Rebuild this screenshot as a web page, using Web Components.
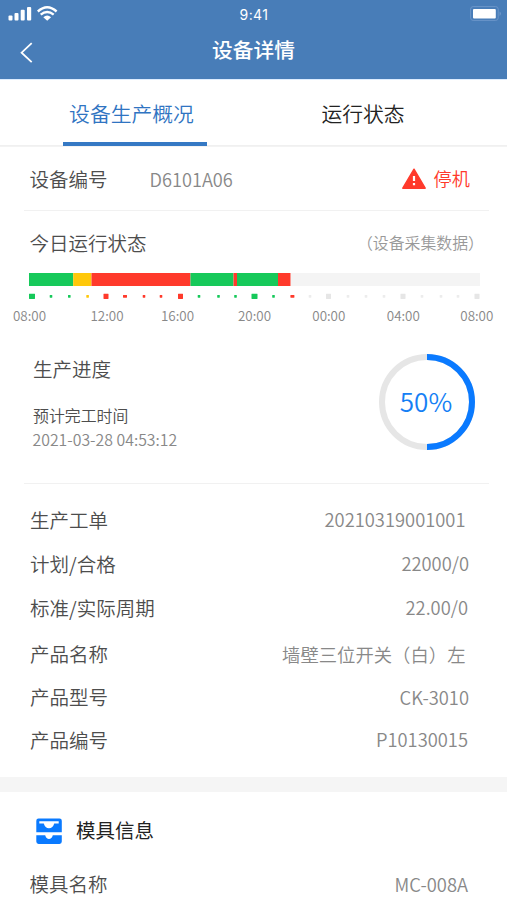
<!DOCTYPE html>
<html lang="zh-CN"><head><meta charset="utf-8"><title>设备详情</title>
<style>
body{margin:0;background:#fff;font-family:"Noto Sans CJK SC","Noto Sans",sans-serif;font-weight:350;color:#555;width:507px;height:900px;overflow:hidden}
</style></head><body>
<device-page></device-page>
<script>
const define=(name,html,setup)=>customElements.define(name,class extends HTMLElement{
  connectedCallback(){
    if(this.shadowRoot)return;
    const t=document.createElement('template');
    t.innerHTML=html;
    this.attachShadow({mode:'open'}).append(t.content.cloneNode(true));
    if(setup)setup.call(this,this.shadowRoot);
  }
});

define('status-bar',`<style>
:host{display:grid;grid-template-columns:1fr auto 1fr;height:29px;color:#fff;align-items:center}
svg{display:block}.r{justify-self:end}
time{font:400 14px/29px Inter,"Liberation Sans",sans-serif;letter-spacing:.4px;padding-left:1px}
</style>
<svg width="60" height="29" fill="#fff"><rect x="8.5" y="15.5" width="4" height="5" rx="1"/><rect x="14.5" y="13" width="4" height="7.5" rx="1"/><rect x="20.7" y="9.8" width="4" height="10.7" rx="1"/><rect x="27" y="7" width="4.2" height="13.5" rx="1"/>
<path d="M43.3 17.2Q47.2 14 51.1 17.2L47.2 20.8Z"/><g fill="none" stroke="#fff" stroke-width="2.4"><path d="M40.7 14.6Q47.2 9.2 53.7 14.6"/><path d="M37.8 11.5Q47.2 3.1 56.6 11.5"/></g></svg>
<time>9:41</time>
<svg class="r" width="40" height="29"><rect x="3.6" y="6.6" width="27.6" height="13.8" rx="2.5" fill="none" stroke="#6b95c9" stroke-width="1"/><rect x="6" y="9" width="22.8" height="9.5" rx="1" fill="#fff"/><path d="M32.7 11.5q2 2.2 0 4.5z" fill="#7ea3d1"/></svg>`);

define('nav-bar',`<style>
:host{display:grid;grid-template-columns:60px 1fr 60px;height:50px;color:#fff}
h1{margin:0;font-size:20.7px;font-weight:500;line-height:41px;text-align:center}
svg{display:block}
</style><svg width="60" height="50"><path d="M31.7 14.2 21.6 23.7 31.7 33.2" fill="none" stroke="#fff" stroke-width="1.8"/></svg><h1><slot></slot></h1>`);

define('tab-item',`<style>
:host{display:flex;flex-direction:column;align-items:center;justify-content:space-between;flex:1;font-size:20.8px;font-weight:350;color:#222}
:host([active]){color:#2f74c2}
:host([active]) i{background:#3579c4}
span{line-height:69px;height:62px}
:host([active]) span{margin-right:7px}
i{width:144px;height:4px}
</style><span><slot></slot></span><i></i>`);

define('tab-strip',`<style>:host{display:flex;height:67px;padding:0 25px 0 26px;box-shadow:inset 0 -1px #f0f0f0,0 1px #f3f3f3}
::slotted(:first-child){flex:0 0 218px}</style><slot></slot>`);

define('info-row',`<style>
:host{display:flex;justify-content:space-between;align-items:center;box-sizing:border-box;height:44px;padding:0 38px 0 30px;font-size:18.35px;color:#888;white-space:nowrap}
b{font-weight:inherit;font-size:19.5px;color:#4d4d4d}
</style><b></b><slot></slot>`,function(r){r.querySelector('b').textContent=this.getAttribute('label')});

define('alarm-state',`<style>
:host{display:flex;align-items:center;gap:7px;color:#ff392b;font-size:18.2px}
span{margin-top:-2px}
</style><svg width="26" height="24"><path d="M13 2.2 24.2 21.2H1.8Z" fill="#ff3a2c" stroke="#ff3a2c" stroke-width="1.4" stroke-linejoin="round"/><path d="M13 9v5M13 16v2.3" stroke="#fff" stroke-width="2.2"/></svg><span><slot></slot></span>`);

define('run-timeline',`<style>
:host{display:block;color:#888;font-size:13.4px}
.bar,.ticks{display:block;margin-left:29px}
.labels{display:flex;line-height:20px;margin-top:1px}
.labels span{width:33px;text-align:center;white-space:nowrap}
</style><svg class="bar" width="451" height="13"></svg><svg class="ticks" width="460" height="18"></svg><div class="labels"></div>`,function(r){
  const G='#16c95a',R='#ff3a2b',Y='#ffc80a',N='#f4f4f4';
  let x=0;
  r.querySelector('.bar').innerHTML=[[44.2,G],[18.3,Y],[99,R],[43,G],[3.5,R],[41,G],[12.7,R],[189.3,N]].map(([w,c])=>{const s='<rect x="'+x+'" width="'+w+'" height="13" fill="'+c+'"/>';x+=w;return s}).join('');
  r.querySelector('.ticks').innerHTML=[32,51,69.3,87.6,106,125,144,161,180.5,199,218.5,235.5,254.5,273.5,292.4,310,328.5,348,366,384,403,422,441,458,477].map((c,i)=>{
    const big=i%4===0,w=big?(i===0||i===12?6:5):(i===5||i===14?4:2.6),h=big?5.2:2.8;
    const col=i===3?Y:i>14?(big?'#e6e6e6':'#ececec'):(i>3&&i<9||i===14)?R:G;
    return '<rect x="'+(c-29-w/2)+'" y="'+(10.3-h/2)+'" width="'+w+'" height="'+h+'" rx=".4" fill="'+col+'"/>'}).join('');
  r.querySelector('.labels').innerHTML=[['08:00',13],['12:00',44.5],['16:00',37.5],['20:00',44],['00:00',41.3],['04:00',41.5],['08:00',40.5]].map(([t,m])=>'<span style="margin-left:'+m+'px">'+t+'</span>').join('');
});

define('progress-ring',`<style>
:host{display:grid;width:98px;height:98px;place-items:center;color:#1580f5;font-size:26px;font-weight:350}
svg,span{grid-area:1/1}
span{margin:-4px 2px 0 0}
</style><svg width="98" height="98" fill="none" stroke-width="6"><circle cx="49" cy="49" r="45" stroke="#e6e6e6"/><path d="M49 4A45 45 0 0 1 49 94" stroke="#0a7aff"/></svg><span><slot></slot></span>`);

define('progress-card',`<style>
:host{display:flex;justify-content:space-between;box-sizing:border-box;height:158px;padding:28px 31px 0 33px;white-space:nowrap}
h2{margin:0 0 18px;font-size:19.5px;font-weight:inherit;line-height:32px;height:32px;color:#4d4d4d}
p{margin:0;font-size:15.9px;line-height:25px;color:#4d4d4d}
.d{color:#888;font-size:15.85px;line-height:24px;margin-left:-.5px}
</style><div><h2>生产进度</h2><p>预计完工时间</p><p class="d">2021-03-28 04:53:12</p></div><progress-ring>50%</progress-ring>`);

define('section-title',`<style>
:host{display:flex;align-items:center;gap:13px;height:78px;padding-left:36px;font-size:19.5px;font-weight:400;color:#222}
span{margin-top:-3px}
</style><svg width="27" height="27" fill="#0a7aff"><path fill-rule="evenodd" d="M2.5.5h21a2.3 2.3 0 0 1 2.3 2.3V14.2H.3V2.8A2.3 2.3 0 0 1 2.5.5ZM3.3 3.2V5.6H7.8C8.5 8.6 10.5 10.3 13 10.3S17.5 8.6 18.2 5.6H22.7V3.2Z"/><path d="M.3 17.2H9.2Q10.3 21 13 21T16.8 17.2H25.8V23.6a2.3 2.3 0 0 1-2.3 2.3H2.6A2.3 2.3 0 0 1 .3 23.6Z"/></svg><span><slot></slot></span>`);

define('rule-line',`<style>:host{display:block;height:1px;margin:0 18px 0 24px;background:#f1f1f1}</style>`);

define('device-page',`<style>
:host{display:block}
header{height:79px;background:#487db8;box-shadow:0 1px #dcecff}
.no{flex:1;margin-left:42px;font-size:18.2px}
.note{font-size:15.9px;color:#999}
.band{height:15px;background:#f5f5f5}
</style>
<header><status-bar></status-bar><nav-bar>设备详情</nav-bar></header>
<tab-strip><tab-item active>设备生产概况</tab-item><tab-item>运行状态</tab-item></tab-strip>
<info-row label="设备编号" style="height:64px;padding-top:1px;padding-right:37px;padding-left:29.5px"><span class="no">D6101A06</span><alarm-state>停机</alarm-state></info-row>
<rule-line></rule-line>
<info-row label="今日运行状态" style="height:62px;padding-right:23px;padding-left:29.5px"><span class="note">（设备采集数据）</span></info-row>
<run-timeline></run-timeline>
<progress-card></progress-card>
<rule-line></rule-line>
<info-row label="生产工单" style="margin-top:13px;padding-right:41.500px">20210319001001</info-row>
<info-row label="计划/合格">22000/0</info-row>
<info-row label="标准/实际周期" style="padding-right:39px">22.00/0</info-row>
<info-row label="产品名称" style="height:49px;padding-right:41.500px">墙壁三位开关（白）左</info-row>
<info-row label="产品型号" style="height:37px">CK-3010</info-row>
<info-row label="产品编号" style="height:48px;padding-right:39px">P10130015</info-row>
<div class="band" style="margin-top:14px"></div>
<section-title>模具信息</section-title>
<info-row label="模具名称" style="height:27px;padding-right:39px;padding-left:29.5px">MC-008A</info-row>`);
</script></body></html>
